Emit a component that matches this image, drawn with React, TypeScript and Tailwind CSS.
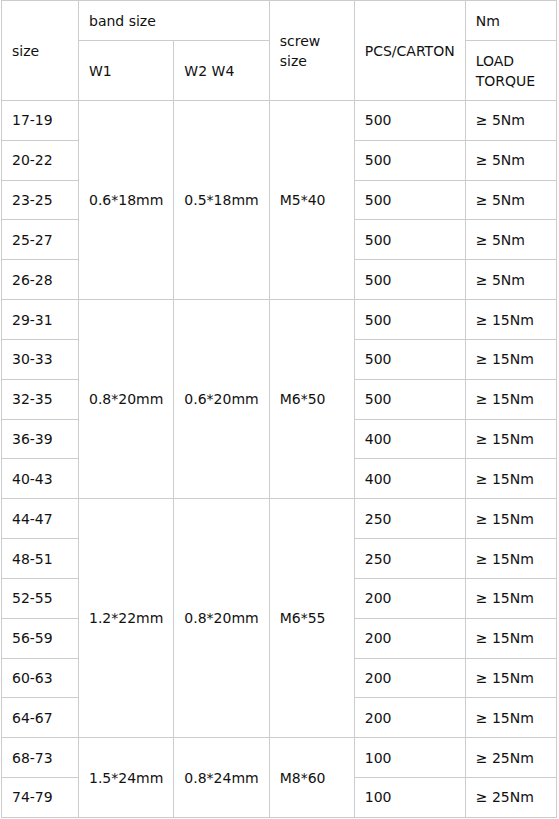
const rows: [string, string, string][] = [
  ["17-19", "500", "≥ 5Nm"],
  ["20-22", "500", "≥ 5Nm"],
  ["23-25", "500", "≥ 5Nm"],
  ["25-27", "500", "≥ 5Nm"],
  ["26-28", "500", "≥ 5Nm"],
  ["29-31", "500", "≥ 15Nm"],
  ["30-33", "500", "≥ 15Nm"],
  ["32-35", "500", "≥ 15Nm"],
  ["36-39", "400", "≥ 15Nm"],
  ["40-43", "400", "≥ 15Nm"],
  ["44-47", "250", "≥ 15Nm"],
  ["48-51", "250", "≥ 15Nm"],
  ["52-55", "200", "≥ 15Nm"],
  ["56-59", "200", "≥ 15Nm"],
  ["60-63", "200", "≥ 15Nm"],
  ["64-67", "200", "≥ 15Nm"],
  ["68-73", "100", "≥ 25Nm"],
  ["74-79", "100", "≥ 25Nm"],
];

// groups that share band / screw cells, keyed by first row index
const groups: Record<number, { span: number; w1: string; w2: string; screw: string }> = {
  0: { span: 5, w1: "0.6*18mm", w2: "0.5*18mm", screw: "M5*40" },
  5: { span: 5, w1: "0.8*20mm", w2: "0.6*20mm", screw: "M6*50" },
  10: { span: 6, w1: "1.2*22mm", w2: "0.8*20mm", screw: "M6*55" },
  16: { span: 2, w1: "1.5*24mm", w2: "0.8*24mm", screw: "M8*60" },
};

const cell = "border border-[#cccccc] px-[10px] align-middle text-left font-normal";

export default function App() {
  return (
    <div className="bg-white w-[559px] h-[819px] overflow-hidden">
      <table
        className="ml-px border-collapse table-fixed text-[14px] leading-[20px] text-[#111111]"
        style={{ fontFamily: '"DejaVu Sans", Verdana, sans-serif' }}
      >
        <colgroup>
          <col className="w-[77px]" />
          <col className="w-[95px]" />
          <col className="w-[95px]" />
          <col className="w-[85px]" />
          <col className="w-[111px]" />
          <col className="w-[91px]" />
        </colgroup>
        <thead>
          <tr className="h-[40px]">
            <th rowSpan={2} className={cell}>size</th>
            <th colSpan={2} className={cell}>band size</th>
            <th rowSpan={2} className={cell}>
              screw
              <br />
              size
            </th>
            <th rowSpan={2} className={cell}>PCS/CARTON</th>
            <th className={cell}>Nm</th>
          </tr>
          <tr className="h-[60px]">
            <th className={cell}>W1</th>
            <th className={cell}>W2 W4</th>
            <th className={cell}>
              LOAD
              <br />
              TORQUE
            </th>
          </tr>
        </thead>
        <tbody>
          {rows.map(([size, pcs, torque], i) => {
            const g = groups[i];
            return (
              <tr key={size} className="h-[39.83px]">
                <td className={cell}>{size}</td>
                {g && (
                  <>
                    <td rowSpan={g.span} className={cell}>{g.w1}</td>
                    <td rowSpan={g.span} className={cell}>{g.w2}</td>
                    <td rowSpan={g.span} className={cell}>{g.screw}</td>
                  </>
                )}
                <td className={cell}>{pcs}</td>
                <td className={cell}>{torque}</td>
              </tr>
            );
          })}
        </tbody>
      </table>
    </div>
  );
}
